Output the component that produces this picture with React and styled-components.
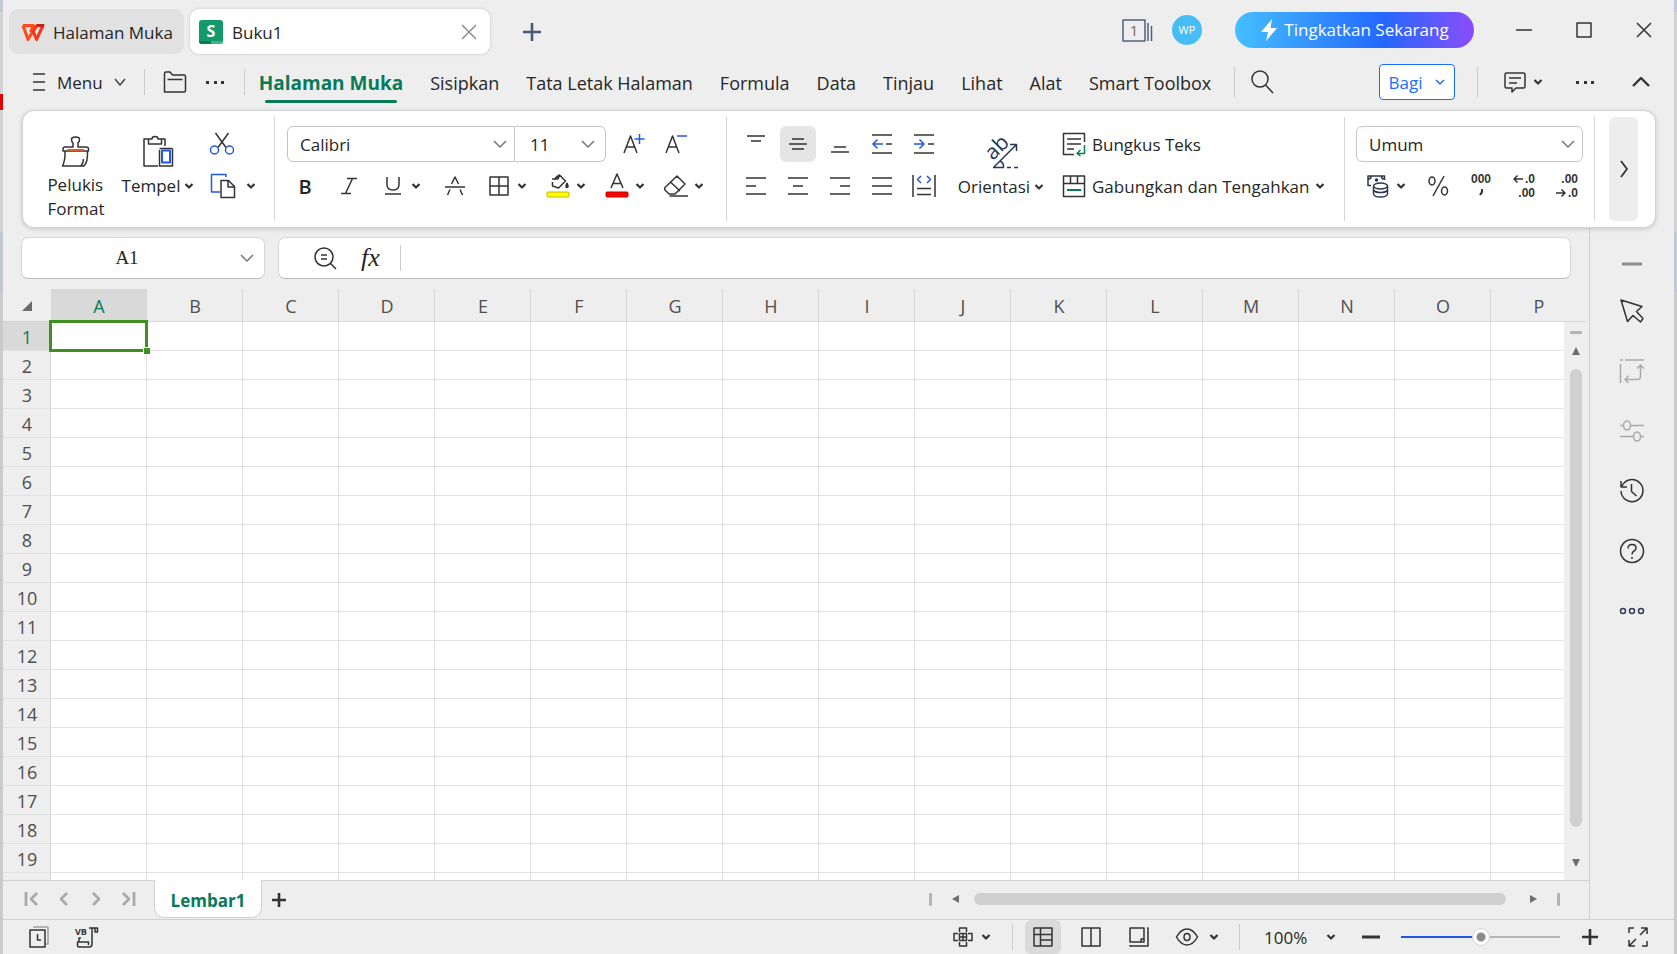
import React, { useState } from 'react';
import styled, { createGlobalStyle } from 'styled-components';

const BLUE = '#2457e0';
const GREEN = '#087a58';

const GlobalStyle = createGlobalStyle`
  * {
    box-sizing: border-box;
  }
  body {
    margin: 0;
    font-family: 'Open Sans', 'Noto Sans', sans-serif;
    font-size: 17px;
    color: #262626;
  }
  button, input, select {
    font: inherit;
    color: inherit;
  }
  button {
    padding: 0;
    border: none;
    background: none;
  }
  svg {
    display: block;
    flex: none;
    overflow: visible;
  }
`;

const Desktop = styled.div`
  height: 100vh;
  padding: 0 3px;
  background:
    linear-gradient(#e00000, #e00000) 0 94px / 3px 16px no-repeat,
    linear-gradient(#c3c9d6 0 12px, #d2d2d2 12px 232px, #c0c6d2 232px 292px, #cacaca 292px);
`;

const Window = styled.div`
  height: 100%;
  display: flex;
  flex-direction: column;
  background: #eeeeee;
`;

const Spacer = styled.div`
  flex: 1;
`;

const Line = styled.span`
  flex: none;
  width: 1px;
  height: ${(p) => p.$h || 26}px;
  background: #cbcbcb;
`;

const IconButton = styled.button`
  display: flex;
  align-items: center;
  justify-content: center;
  flex: none;
  width: ${(p) => p.$w || 36}px;
  height: 36px;
  border-radius: 6px;
  background: ${(p) => (p.$active ? '#e5e5e5' : 'transparent')};
`;

/* title bar */

const TitleBar = styled.header`
  display: flex;
  align-items: center;
  flex: none;
  height: 57px;
  padding: 6px 6px 0;
`;

const HomeTab = styled.button`
  display: flex;
  align-items: center;
  gap: 8px;
  height: 45px;
  width: 175px;
  padding: 2px 0 0 12px;
  border-radius: 9px;
  background: #e1e1e1;
`;

const DocTab = styled.div`
  display: flex;
  align-items: center;
  gap: 9px;
  width: 300px;
  height: 45px;
  margin: 0 24px 0 6px;
  padding: 1px 3px 0 9px;
  border-radius: 9px;
  background: #fff;
  box-shadow: 0 0 3px #bdbdbd;
`;

const TitleTools = styled.div`
  display: flex;
  align-items: center;
  height: 45px;
  padding-bottom: 4px;
`;

const Avatar = styled.span`
  display: flex;
  align-items: center;
  justify-content: center;
  width: 30px;
  height: 30px;
  margin: 0 33px 0 18px;
  border-radius: 50%;
  background: #46bdf4;
  color: #fff;
  font-size: 11px;
`;

const UpgradeButton = styled.button`
  display: flex;
  align-items: center;
  justify-content: center;
  gap: 6px;
  width: 239px;
  height: 36px;
  margin-right: 26px;
  border-radius: 18px;
  background: linear-gradient(90deg, #45bffe, #2368ff 62%, #8a4dfb);
  color: #fff;
`;

const WindowButtons = styled.div`
  display: flex;
  gap: 12px;
`;

/* menu bar */

const MenuBar = styled.nav`
  display: flex;
  align-items: center;
  flex: none;
  height: 53px;
  padding: 0 15px 3px 29px;
`;

const MenuButton = styled.button`
  display: flex;
  align-items: center;
  gap: 11px;
  margin-right: 18px;
`;

const MoreButton = styled(IconButton)`
  width: 20px;
  margin-right: 19px;
`;

const Tabs = styled.div`
  display: flex;
  gap: 27px;
  margin: 0 23px 0 14px;
`;

const Tab = styled.button`
  position: relative;
  height: 42px;
  padding-top: 2px;
  font-size: ${(p) => (p.$active ? 19 : 18)}px;
  line-height: 40px;
  white-space: nowrap;
  font-weight: ${(p) => (p.$active ? 700 : 400)};
  color: ${(p) => (p.$active ? GREEN : '#262626')};

  &::after {
    content: '';
    position: absolute;
    left: 6px;
    right: 6px;
    bottom: 0;
    height: 3px;
    border-radius: 2px;
    background: ${(p) => (p.$active ? GREEN : 'transparent')};
  }
`;

const ShareButton = styled.button`
  display: flex;
  align-items: center;
  justify-content: center;
  gap: 13px;
  width: 76px;
  height: 36px;
  margin-right: 22px;
  border: 1px solid #1a6dff;
  border-radius: 4px;
  background: #fff;
  color: #1a6dff;
`;

const MenuEnd = styled.div`
  display: flex;
  gap: 20px;
  padding-left: 23px;
`;

/* ribbon */

const Ribbon = styled.section`
  position: relative;
  display: flex;
  flex: none;
  height: 118px;
  margin: 0 18px 0 19px;
  padding: 6px 0;
  border: 1px solid #d2d2d2;
  border-radius: 12px;
  background: #fff;
  box-shadow: 0 1px 4px #c4c4c4;
`;

const Group = styled.div`
  display: flex;
  flex: ${(p) => (p.$grow ? 1 : 'none')};
  padding: 0 ${(p) => p.$right || 0}px 0 ${(p) => p.$left || 0}px;
  border-right: 1px solid #d6d6d6;
`;

const Rows = styled.div`
  display: flex;
  flex-direction: column;
  gap: 6px;
  padding-top: 9px;
`;

const Row = styled.div`
  display: flex;
  align-items: center;
  height: 36px;
  gap: ${(p) => p.$gap || 0}px;
  padding-left: ${(p) => p.$left || 0}px;
`;

const BigButton = styled.button`
  display: flex;
  flex-direction: column;
  align-items: center;
  width: ${(p) => p.$w}px;
  margin-right: ${(p) => p.$gap}px;
  padding-top: 18px;
  line-height: 24px;
  text-align: left;
`;

const BigLabel = styled.span`
  display: flex;
  align-items: center;
  gap: 4px;
  margin-top: ${(p) => p.$top || 6}px;
`;

const Split = styled.button`
  display: flex;
  align-items: center;
  flex: none;
  gap: 4px;
  width: ${(p) => p.$w || 46}px;
  height: 36px;
`;

const SplitFace = styled.span`
  display: flex;
  justify-content: center;
  width: ${(p) => p.$w || 28}px;
`;

const LabelButton = styled.button`
  display: flex;
  align-items: center;
  gap: 6px;
  height: 36px;
  white-space: nowrap;
`;

const AlignLabels = styled.div`
  display: flex;
  margin-left: 15px;
`;

const SelectBox = styled.label`
  position: relative;
  display: flex;
  width: ${(p) => p.$w}px;
  height: 36px;

  select {
    appearance: none;
    width: 100%;
    padding: 0 30px 0 ${(p) => (p.$joined ? 15 : 12)}px;
    border: 1px solid #c6c6c6;
    border-left-width: ${(p) => (p.$joined ? 0 : 1)}px;
    border-radius: ${(p) => p.$radius || '6px'};
    background: #fff;
    outline: none;
  }
  svg {
    position: absolute;
    right: ${(p) => (p.$joined ? 11 : 8)}px;
    top: 14px;
    pointer-events: none;
  }
`;

const Letter = styled.span`
  font-size: 20px;
  font-weight: 600;
`;

const MoreRibbon = styled.button`
  display: flex;
  align-items: center;
  justify-content: center;
  width: 29px;
  margin: 0 17px 0 14px;
  border-radius: 6px;
  background: #ededed;
`;

/* work area */

const Work = styled.div`
  display: flex;
  flex: 1;
  min-height: 0;
`;

const Main = styled.main`
  display: flex;
  flex: 1;
  flex-direction: column;
  min-width: 0;
  border-right: 1px solid #cfcfcf;
`;

const FormulaRow = styled.div`
  display: flex;
  flex: none;
  gap: 13px;
  padding: 9px 18px 10px;
`;

const Field = styled.div`
  display: flex;
  align-items: center;
  flex: ${(p) => (p.$w ? 'none' : 1)};
  width: ${(p) => (p.$w ? `${p.$w}px` : 'auto')};
  height: 42px;
  padding: 0 10px;
  border: 1px solid #d6d6d6;
  border-bottom-color: #bdbdbd;
  border-radius: 7px;
  background: #fff;
`;

const FormulaInput = styled.input`
  flex: 1;
  min-width: 0;
  border: none;
  outline: none;
  background: none;
`;

const NameInput = styled(FormulaInput)`
  padding-right: 20px;
  font-family: 'Liberation Serif', serif;
  font-size: 19px;
  text-align: center;
`;

const FormulaTools = styled.div`
  display: flex;
  align-items: center;
  gap: 18px;
  padding: 0 20px 0 18px;
`;

const Fx = styled.span`
  font: italic 26px 'Liberation Serif', serif;
`;

const SheetArea = styled.div`
  position: relative;
  flex: 1;
  min-height: 0;
  overflow: hidden;
`;

const Sheet = styled.table`
  table-layout: fixed;
  width: 1584px;
  border-collapse: separate;
  border-spacing: 0;

  th {
    padding: 2px 0 0 1px;
    font-size: 18px;
    font-weight: 400;
    color: #4f4f4f;
    background: #eeeeee;
    border-right: 1px solid #d6d6d6;
    border-bottom: 1px solid #d6d6d6;
  }
  thead th {
    height: 33px;
    line-height: 30px;
  }
  tbody th {
    height: 29px;
    line-height: 26px;
    border-bottom-color: #e2e2e2;
  }
  thead th:first-child,
  thead th:last-child {
    border-right-color: transparent;
  }
  td {
    position: relative;
    padding: 0;
    background: #fff;
    border-right: 1px solid #e2e2e2;
    border-bottom: 1px solid #e2e2e2;
  }
  && .on {
    background: #d9d9d9;
    color: ${GREEN};
  }
`;

const Corner = styled.span`
  display: flex;
  justify-content: center;
`;

const Cursor = styled.div`
  position: absolute;
  z-index: 1;
  inset: -2px;
  border: 3px solid #3f8f22;

  &::after {
    content: '';
    position: absolute;
    right: -5px;
    bottom: -5px;
    width: 6px;
    height: 6px;
    border: 1px solid #fff;
    border-width: 1px 0 0 1px;
    background: #3f8f22;
  }
`;

const VScroll = styled.div`
  position: absolute;
  top: 33px;
  right: 0;
  bottom: 0;
  display: flex;
  flex-direction: column;
  align-items: center;
  width: 25px;
  padding: 9px 2px 12px 0;
  background: #eeeeee;
`;

const Grip = styled.span`
  flex: none;
  width: ${(p) => p.$w}px;
  height: ${(p) => p.$h}px;
  border-radius: 1px;
  background: #b4b4b4;
`;

const VTrack = styled.span`
  display: flex;
  flex: 1;
  flex-direction: column;
  align-items: center;
  padding-top: 12px;
`;

const VThumb = styled.span`
  flex: 1;
  width: 12px;
  margin: 13px 0 31px;
  border-radius: 6px;
  background: #d0d0d0;
`;

const HTrack = styled.span`
  display: flex;
  flex: 1;
  align-items: center;
  padding: 0 19px;
`;

const HThumb = styled.span`
  flex: 1;
  height: 12px;
  margin: 0 22px 0 13px;
  border-radius: 6px;
  background: #d0d0d0;
`;

const SheetBar = styled.div`
  display: flex;
  flex: none;
  height: 39px;
  padding: 0 29px 0 13px;
  border-top: 1px solid #d3d3d3;
`;

const SheetTab = styled.button`
  position: relative;
  height: 38px;
  width: 108px;
  margin: -1px 0 0 10px;
  padding-top: 3px;
  border: 1px solid #d3d3d3;
  border-top: none;
  border-radius: 0 0 10px 10px;
  background: #fff;
  color: ${GREEN};
  font-weight: 700;
`;

const HScroll = styled.div`
  display: flex;
  align-items: center;
  width: 631px;
  height: 36px;
`;

const SideBar = styled.aside`
  display: flex;
  flex-direction: column;
  align-items: center;
  gap: 27px;
  width: 84px;
  padding-top: 34px;
`;

const SideButtons = styled.div`
  display: flex;
  flex-direction: column;
  gap: 24px;
`;

/* status bar */

const StatusBar = styled.footer`
  display: flex;
  align-items: center;
  flex: none;
  height: 35px;
  padding: 0 18px;
  border-top: 1px solid #d0d0d0;
`;

const StatusTools = styled.div`
  display: flex;
  align-items: center;
  gap: 12px;
  margin-left: ${(p) => p.$left || 0}px;
`;

const ViewButton = styled(IconButton)`
  height: 34px;
  background: ${(p) => (p.$active ? '#dadada' : 'transparent')};
`;

const ZoomTools = styled.div`
  display: flex;
  align-items: center;
  margin-left: 20px;
`;

const ZoomButton = styled.button`
  display: flex;
  align-items: center;
  justify-content: space-between;
  width: 72px;
  margin: 0 17px 0 24px;
`;

const ZoomSlider = styled.input`
  appearance: none;
  width: 159px;
  height: 20px;
  margin: 0 12px;
  background: none;

  &::-webkit-slider-runnable-track {
    height: 2px;
    background: linear-gradient(90deg, #1e55e6 50%, #b5b5b5 50%);
  }
  &::-webkit-slider-thumb {
    appearance: none;
    width: 18px;
    height: 18px;
    margin-top: -8px;
    border: 1px solid #d4d4d4;
    border-radius: 50%;
    background: radial-gradient(circle, #8b8b8b 4px, #fff 5px);
  }
`;

const FullScreen = styled(IconButton)`
  margin-left: 12px;
`;

/* icons */

const Icon = ({ w = 24, h = 24, c = '#333', s = 1.5, children }) => (
  <svg
    width={w}
    height={h}
    viewBox={`0 0 ${w} ${h}`}
    fill="none"
    stroke={c}
    strokeWidth={s}
    strokeLinejoin="round"
    aria-hidden="true"
  >
    {children}
  </svg>
);

const Caret = () => (
  <Icon w={10} h={8} s={2.2}>
    <path d="M1.500 2L5 5.500L8.500 2" />
  </Icon>
);

const Chevron = ({ w = 14, c = '#777' }) => (
  <Icon w={w} h={8} c={c}>
    <path d={`M1 1L${w / 2} 7L${w - 1} 1`} />
  </Icon>
);

const SmallChevron = () => (
  <Icon w={10} h={6} c="#1a6dff">
    <path d="M1 1L5 5L9 1" />
  </Icon>
);

const Tri = ({ d }) => (
  <Icon w={10} h={10} s={0}>
    <path d={d} fill="#6f6f6f" />
  </Icon>
);

const Dots = () => (
  <Icon w={20} h={4} s={0}>
    <path d="M1 1h3v3h-3zM9 1h3v3h-3zM16 1h3v3h-3z" fill="#333" />
  </Icon>
);

const WpsLogo = () => (
  <svg width="24" height="20" viewBox="0 0 24 20" fill="none" strokeLinejoin="round" aria-hidden="true">
    <path d="M2 2.500H12.500L9.500 9M2 2.500L7 16.500L15 3" stroke="#ff4a1c" strokeWidth="3" />
    <path d="M12 8L15.500 16.500L22 2.500H16L12 8.500" stroke="#f7371d" strokeWidth="3" />
    <path d="M16 1H23.500L21.500 5.500C20 3.500 18 3.500 15 4Z" fill="#c9201a" />
  </svg>
);

const SheetLogo = () => (
  <svg width="24" height="24" viewBox="0 0 24 24" aria-hidden="true">
    <rect width="24" height="24" rx="3" fill="#129a6b" />
    <path d="M0 21h12v3H3a3 3 0 0 1-3-3z" fill="#067a50" />
    <path d="M12 21h12a3 3 0 0 1-3 3h-9z" fill="#3fb68a" />
    <text x="12" y="17" textAnchor="middle" fontSize="16" fontWeight="700" fill="#fff">S</text>
  </svg>
);

const FontSizeIcon = ({ minus }) => (
  <Icon w={22} h={22}>
    <path d="M1 20L7.500 3L14 20M3.500 14H11.500" />
    <path d={minus ? 'M12 3H22' : 'M11.500 6H21.500M16.500 1V11'} stroke={BLUE} />
  </Icon>
);

const alignLines = {
  top: 'M3 4H21M7 9H17',
  middle: 'M6 7H18M3 12H21M6 17H18',
  bottom: 'M6 15H18M3 20H21',
  left: 'M2 4H22M2 12H12M2 20H22',
  center: 'M2 4H22M7 12H17M2 20H22',
  right: 'M2 4H22M12 12H22M2 20H22',
  justify: 'M2 4H22M2 12H22M2 20H22',
};

const Align = ({ kind }) => (
  <Icon>
    <path d={alignLines[kind]} />
  </Icon>
);

const Indent = ({ out }) => (
  <Icon>
    <path d="M2 3H22M2 21H22M16 12H22" />
    <path d={out ? 'M13 12H3M7.500 7.500L3 12L7.500 16.500' : 'M2 12H12M7.500 7.500L12 12L7.500 16.500'} stroke={BLUE} />
  </Icon>
);

const digitText = {
  fill: '#333',
  stroke: 'none',
  fontFamily: 'Liberation Sans',
  fontSize: 12,
  fontWeight: 700,
};

const Digits = ({ top, bottom, arrow }) => (
  <Icon w={24} h={30}>
    <g {...digitText} textAnchor="end">
      <text x="23" y="12">{top}</text>
      <text x="23" y="26">{bottom}</text>
    </g>
    <path d={arrow} />
  </Icon>
);

const Painter = () => (
  <Icon w={30} h={32}>
    <path d="M12 12V8Q10.500 6.500 10.500 4.500Q10.500 2 14.500 2Q18.500 2 18.500 4.500Q18.500 6.500 17 8V12H25Q27.500 12 27.500 14V16H2V14Q2 12 4 12ZM4 16Q4.500 25 1.500 31H23Q27 27 26.500 16M20 31Q22.500 28 22.500 24" />
    <path d="M6 15H23" stroke="#d9622b" strokeWidth="2" />
  </Icon>
);

const Paste = () => (
  <Icon w={32} h={32}>
    <path d="M7 4H2V31H16M23 11V4H19M6.500 4V9H19.500V4H16Q16 1.500 13 1.500Q10 1.500 10 4ZM17.500 31V15M30.500 13.500V31H17" />
    <rect x="20" y="15.500" width="8" height="12" stroke={BLUE} strokeWidth="2" />
    <path d="M17.500 13.500H30.500" />
  </Icon>
);

const Cut = () => (
  <Icon w={26} h={24}>
    <path d="M6.500 1L17 15.500M19.500 1L9 15.500" />
    <circle cx="5.500" cy="18" r="4" stroke={BLUE} />
    <circle cx="20.500" cy="18" r="4" stroke={BLUE} />
  </Icon>
);

const Copy = () => (
  <Icon w={26} h={26}>
    <path d="M10 19H1.500V1.500H16V4" stroke={BLUE} />
    <path d="M11 7.500H18.500L24.500 13.500V24.500H11ZM18 8V14H24" />
  </Icon>
);

const Orientation = () => (
  <Icon w={36} h={34} c="#2c3550">
    <text x="10" y="26" transform="rotate(-45 10 26)" fontSize="21" fill="#2c3550" stroke="none">
      ab
    </text>
    <path d="M11 32L33 10M27 9.500H33.500V16M10 32.500H21M24 32.500H28M31 32.500H35M17 26Q21 28 20.500 32" />
  </Icon>
);

const Wrap = () => (
  <Icon>
    <path d="M12 22.500H1.500V1.500H22.500V10M5 7H19M5 12H19M5 17H12" />
    <path d="M22.500 13V21.500H15M18.500 18L15 21.500L18.500 24" stroke={GREEN} />
  </Icon>
);

const Merge = () => (
  <Icon>
    <path d="M1.500 2H22.500V22.500H1.500ZM1.500 9.500H22.500M8.500 2V9M15.500 2V9" />
    <path d="M5 16H19" stroke={GREEN} strokeWidth="2" />
  </Icon>
);

const Money = () => (
  <Icon w={24} h={24} c="#2c3550">
    <path d="M5 11.500H2V2H18.500V6M2.500 5Q5 5 5 2.500M15.500 2.500Q15.500 5 18 5" />
    <circle cx="10.500" cy="6" r="1" fill="#2c3550" />
    <ellipse cx="14.500" cy="12" rx="7" ry="3" />
    <path d="M7.500 12V20Q8 23 14.500 23Q21 23 21.500 20V12M7.500 16Q9 18.500 14.500 18.500Q20 18.500 21.500 16" />
  </Icon>
);

const sideIcons = [
  {
    label: 'Pilih',
    art: <path d="M2 2L23 8.500L17.500 13.500L24 20.500L21.500 24L14 17.500L8.500 23.500Z" />,
  },
  {
    label: 'Properti',
    c: '#a9a9a9',
    art: <path d="M6 2H25M1.500 6V25M1 2H4M21.500 7V18.500Q21.500 21.500 18.500 21.500H6M18 10.500L21.500 7L25 10.500M9.500 18L6 21.500L9.500 25" />,
  },
  {
    label: 'Pengaturan',
    c: '#a9a9a9',
    art: (
      <>
        <path d="M1 7.500H4M12 7.500H25M1 18.500H14M22 18.500H25" />
        <ellipse cx="8" cy="7.500" rx="3.500" ry="4.500" />
        <ellipse cx="18" cy="18.500" rx="3.500" ry="4.500" />
      </>
    ),
  },
  {
    label: 'Riwayat',
    art: <path d="M3 8A11 11 0 1 1 2 13M2 3V9H8M12.500 6V13.500L17.500 18" />,
  },
  {
    label: 'Bantuan',
    art: (
      <>
        <circle cx="13" cy="13" r="11.500" />
        <path d="M9 10.500Q9 6.500 13 6.500Q17 6.500 17 10Q17 12 15 13Q13 14 13 16.500M13 19V21" />
      </>
    ),
  },
  {
    label: 'Lainnya',
    art: (
      <g stroke="#333b55">
        <circle cx="4" cy="13" r="2.500" />
        <circle cx="13" cy="13" r="2.500" />
        <circle cx="22" cy="13" r="2.500" />
      </g>
    ),
  },
];

const sheetNav = [
  { label: 'Lembar pertama', d: 'M2 2V16M13 3L7 9L13 15' },
  { label: 'Sebelumnya', d: 'M11 3L5 9L11 15' },
  { label: 'Berikutnya', d: 'M5 3L11 9L5 15' },
  { label: 'Lembar terakhir', d: 'M3 3L9 9L3 15M14 2V16' },
];

const views = [
  { label: 'Normal', d: 'M2 2H20V20H2ZM2 8.500H20M8.500 2V20M8.500 14H20' },
  { label: 'Tata letak halaman', d: 'M2 2H20V20H2ZM11 2V20' },
  { label: 'Pratinjau', d: 'M2 2H16V16H2ZM19 2H20V20H2V19M13 16V13H16' },
];

const tabs = [
  'Halaman Muka',
  'Sisipkan',
  'Tata Letak Halaman',
  'Formula',
  'Data',
  'Tinjau',
  'Lihat',
  'Alat',
  'Smart Toolbox',
];
const columns = 'ABCDEFGHIJKLMNOP'.split('');
const rows = Array.from({ length: 20 }, (_, i) => i + 1);

const Title = () => (
  <TitleBar>
    <HomeTab>
      <WpsLogo />
      Halaman Muka
    </HomeTab>
    <DocTab>
      <SheetLogo />
      Buku1
      <Spacer />
      <IconButton aria-label="Tutup tab">
        <Icon w={16} h={16} c="#8c8c8c">
          <path d="M1 1L15 15M15 1L1 15" />
        </Icon>
      </IconButton>
    </DocTab>
    <IconButton aria-label="Tab baru">
      <Icon w={20} h={20} c="#4a5a7c" s={2.6}>
        <path d="M1 10H19M10 1V19" />
      </Icon>
    </IconButton>
    <Spacer />
    <TitleTools>
      <Icon w={32} h={24} c="#52617f">
        <rect x="1" y="2" width="22" height="21" />
        <path d="M26 5V23M29.500 8V23" />
        <text x="12" y="18" textAnchor="middle" fontSize="15" fill="#7a6a50" stroke="none">1</text>
      </Icon>
      <Avatar>WP</Avatar>
      <UpgradeButton>
        <svg width="18" height="24" viewBox="0 0 18 24" aria-hidden="true">
          <path d="M12 1L1 14H8L6 23L17 10H10.500Z" fill="#fff" />
        </svg>
        Tingkatkan Sekarang
      </UpgradeButton>
      <WindowButtons>
        <IconButton $w={48} aria-label="Kecilkan">
          <Icon w={16} h={16}>
            <path d="M0 8H16" />
          </Icon>
        </IconButton>
        <IconButton $w={48} aria-label="Besarkan">
          <Icon w={16} h={16}>
            <rect x="1" y="1" width="14" height="14" />
          </Icon>
        </IconButton>
        <IconButton $w={48} aria-label="Tutup">
          <Icon w={16} h={16}>
            <path d="M1 1L15 15M15 1L1 15" />
          </Icon>
        </IconButton>
      </WindowButtons>
    </TitleTools>
  </TitleBar>
);

const Menu = () => {
  const [tab, setTab] = useState(tabs[0]);
  return (
    <MenuBar>
      <MenuButton>
        <Icon w={14} h={18}>
          <path d="M1 1H13M1 9H13M1 17H13" />
        </Icon>
        Menu
        <Chevron w={12} c="#444" />
      </MenuButton>
      <Line />
      <IconButton $w={60} aria-label="Buka">
        <Icon>
          <path d="M1.500 22V3.500Q1.500 2 3 2H7L9.500 5H21Q22.500 5 22.500 6.500V20.500Q22.500 22 21 22ZM4.500 9.500H19.500" />
        </Icon>
      </IconButton>
      <MoreButton aria-label="Lainnya">
        <Dots />
      </MoreButton>
      <Line />
      <Tabs>
        {tabs.map((name) => (
          <Tab key={name} $active={name === tab} onClick={() => setTab(name)}>
            {name}
          </Tab>
        ))}
      </Tabs>
      <Line $h={30} />
      <IconButton $w={54} aria-label="Cari">
        <Icon>
          <circle cx="10" cy="9" r="8" />
          <path d="M15.500 15L23 23" />
        </Icon>
      </IconButton>
      <Spacer />
      <ShareButton>
        Bagi
        <SmallChevron />
      </ShareButton>
      <Line $h={30} />
      <MenuEnd>
        <Split aria-label="Komentar">
          <SplitFace>
            <Icon>
              <path d="M3.500 3H20.500Q22 3 22 4.500V16.500Q22 18 20.500 18H13L9 22V18H3.500Q2 18 2 16.500V4.500Q2 3 3.500 3ZM6 8H18M6 13H14" />
            </Icon>
          </SplitFace>
          <Caret />
        </Split>
        <IconButton aria-label="Opsi lain">
          <Dots />
        </IconButton>
        <IconButton aria-label="Ciutkan pita">
          <Icon w={20} h={12} s={2.4}>
            <path d="M2 10L10 2L18 10" />
          </Icon>
        </IconButton>
      </MenuEnd>
    </MenuBar>
  );
};

const ClipboardGroup = () => (
  <Group $left={21} $right={1}>
    <BigButton $w={64} $gap={11}>
      <Painter />
      <BigLabel>
        Pelukis
        <br />
        Format
      </BigLabel>
    </BigButton>
    <BigButton $w={78} $gap={7}>
      <Paste />
      <BigLabel $top={7}>
        Tempel
        <Caret />
      </BigLabel>
    </BigButton>
    <Rows>
      <IconButton aria-label="Potong">
        <Cut />
      </IconButton>
      <Split $w={69} aria-label="Salin">
        <SplitFace $w={38}>
          <Copy />
        </SplitFace>
        <Caret />
      </Split>
    </Rows>
  </Group>
);

const FontGroup = () => (
  <Group $left={12} $right={18}>
    <Rows>
      <Row>
        <SelectBox $w={228} $radius="6px 0 0 6px">
          <select aria-label="Font" defaultValue="Calibri">
            <option>Calibri</option>
          </select>
          <Chevron />
        </SelectBox>
        <SelectBox $w={91} $radius="0 6px 6px 0" $joined>
          <select aria-label="Ukuran font" defaultValue="11">
            <option>11</option>
          </select>
          <Chevron />
        </SelectBox>
        <Row $gap={6} $left={10}>
          <IconButton aria-label="Perbesar font">
            <FontSizeIcon />
          </IconButton>
          <IconButton aria-label="Perkecil font">
            <FontSizeIcon minus />
          </IconButton>
        </Row>
      </Row>
      <Row $gap={13} $left={4}>
        <IconButton $w={28} aria-label="Tebal">
          <Letter>B</Letter>
        </IconButton>
        <IconButton $w={34} aria-label="Miring">
          <Icon w={18} h={18}>
            <path d="M7 1.500H17M1 16.500H11M12.500 1.500L5.500 16.500" />
          </Icon>
        </IconButton>
        <Split aria-label="Garis bawah">
          <SplitFace>
            <Icon w={18} h={18}>
              <path d="M3 0V7.500Q3 13 9 13Q15 13 15 7.500V0M1 17H17" />
            </Icon>
          </SplitFace>
          <Caret />
        </Split>
        <IconButton $w={34} aria-label="Coret">
          <Icon w={20} h={20}>
            <path d="M6.500 8L10 1L13.500 8M0 11H20M2.500 19L5 13.500M17.500 19L15 13.500" />
          </Icon>
        </IconButton>
        <Split aria-label="Batas">
          <SplitFace>
            <Icon w={22} h={22}>
              <path d="M2 2H20V20H2ZM2 11H20M11 2V20" />
            </Icon>
          </SplitFace>
          <Caret />
        </Split>
        <Split aria-label="Warna isian">
          <SplitFace>
            <Icon w={24} h={26}>
              <path d="M6 6H12L13.500 2L19.500 8L12.500 15L6.500 13V9M13.500 2Q10 4 8 6.500" />
              <path d="M21 10Q19 14 21 14.500Q23 14 21 10" fill="#333" />
              <rect x="1" y="19" width="22" height="5" rx="1" fill="#ffff00" stroke="#c8b400" strokeWidth="1" />
            </Icon>
          </SplitFace>
          <Caret />
        </Split>
        <Split aria-label="Warna font">
          <SplitFace>
            <Icon w={24} h={26}>
              <path d="M6 15L12 1L18 15M8.500 10.500H15.500" />
              <rect x="1" y="19" width="22" height="5" rx="1" fill="#ff0000" stroke="#c00000" strokeWidth="1" />
            </Icon>
          </SplitFace>
          <Caret />
        </Split>
        <Split aria-label="Hapus">
          <SplitFace>
            <Icon w={26} h={24}>
              <path d="M14 2L22 10L12 20H6L2 16Q1 14 2.500 13ZM8 8.500L17 17M6.500 22H25" />
            </Icon>
          </SplitFace>
          <Caret />
        </Split>
      </Row>
    </Rows>
  </Group>
);

const AlignGroup = () => {
  const [vertical, setVertical] = useState('middle');
  return (
    <Group $left={11} $grow>
      <Rows>
        <Row $gap={6}>
          {['top', 'middle', 'bottom'].map((kind) => (
            <IconButton key={kind} aria-label={kind} $active={kind === vertical} onClick={() => setVertical(kind)}>
              <Align kind={kind} />
            </IconButton>
          ))}
          <IconButton aria-label="Kurangi indentasi">
            <Indent out />
          </IconButton>
          <IconButton aria-label="Tambah indentasi">
            <Indent />
          </IconButton>
        </Row>
        <Row $gap={6}>
          {['left', 'center', 'right', 'justify'].map((kind) => (
            <IconButton key={kind} aria-label={kind}>
              <Align kind={kind} />
            </IconButton>
          ))}
          <IconButton aria-label="Distribusi">
            <Icon w={26}>
              <path d="M2 1V23M24 1V23M6 14.500H20M6 20.500H20" />
              <path d="M10 2L6.500 5.500L10 9M16 2L19.500 5.500L16 9" stroke={BLUE} />
            </Icon>
          </IconButton>
        </Row>
      </Rows>
      <AlignLabels>
        <BigButton $w={88} $gap={17}>
          <Orientation />
          <BigLabel>
            Orientasi
            <Caret />
          </BigLabel>
        </BigButton>
        <Rows>
          <LabelButton>
            <Wrap />
            Bungkus Teks
          </LabelButton>
          <LabelButton>
            <Merge />
            Gabungkan dan Tengahkan
            <Caret />
          </LabelButton>
        </Rows>
      </AlignLabels>
    </Group>
  );
};

const NumberGroup = () => (
  <Group $left={11} $right={9}>
    <Rows>
      <SelectBox $w={227}>
        <select aria-label="Format angka" defaultValue="Umum">
          <option>Umum</option>
        </select>
        <Chevron />
      </SelectBox>
      <Row $left={8} $gap={7}>
        <Split $w={49} aria-label="Mata uang">
          <SplitFace>
            <Money />
          </SplitFace>
          <Caret />
        </Split>
        <IconButton aria-label="Persen">
          <Icon w={22}>
            <path d="M17 2L6 22" />
            <ellipse cx="5" cy="7" rx="3" ry="4" />
            <ellipse cx="17.500" cy="17" rx="3" ry="4" />
          </Icon>
        </IconButton>
        <IconButton aria-label="Pemisah ribuan">
          <Icon w={24} h={30}>
            <text x="12" y="12" textAnchor="middle" {...digitText}>000</text>
            <path d="M12 19H13V21L11 24" strokeWidth="2.200" />
          </Icon>
        </IconButton>
        <IconButton aria-label="Tambah desimal">
          <Digits top=".0" bottom=".00" arrow="M11 8H2M5.500 4.500L2 8L5.500 11.500" />
        </IconButton>
        <IconButton aria-label="Kurangi desimal">
          <Digits top=".00" bottom=".0" arrow="M1 22H10M6.500 18.500L10 22L6.500 25.500" />
        </IconButton>
      </Row>
    </Rows>
  </Group>
);

const Grid = () => (
  <Sheet>
    <colgroup>
      <col width="48" />
      {columns.map((c) => (
        <col key={c} />
      ))}
    </colgroup>
    <thead>
      <tr>
        <th aria-label="Pilih semua">
          <Corner>
            <Icon w={12} h={10} s={0}>
              <path d="M11 0V10H1Z" fill="#6b6b6b" />
            </Icon>
          </Corner>
        </th>
        {columns.map((c) => (
          <th key={c} className={c === 'A' ? 'on' : undefined}>
            {c}
          </th>
        ))}
      </tr>
    </thead>
    <tbody>
      {rows.map((r) => (
        <tr key={r}>
          <th className={r === 1 ? 'on' : undefined}>{r}</th>
          {columns.map((c) => (
            <td key={c}>{r === 1 && c === 'A' && <Cursor />}</td>
          ))}
        </tr>
      ))}
    </tbody>
  </Sheet>
);

const Workbook = () => (
  <Main>
    <FormulaRow>
      <Field $w={244}>
        <NameInput aria-label="Kotak nama" defaultValue="A1" />
        <Chevron />
      </Field>
      <Field>
        <FormulaTools>
          <IconButton aria-label="Cari fungsi">
            <Icon>
              <circle cx="11" cy="11" r="9" />
              <path d="M17.500 17.500L23 23M8 9H14M8 13H14" />
            </Icon>
          </IconButton>
          <Fx>fx</Fx>
        </FormulaTools>
        <Line />
        <FormulaInput aria-label="Rumus" />
      </Field>
    </FormulaRow>
    <SheetArea>
      <Grid />
      <VScroll>
        <Grip $w={12} $h={3} />
        <VTrack>
          <Tri d="M5 1L9 9H1Z" />
          <VThumb />
          <Tri d="M1 1H9L5 9Z" />
        </VTrack>
      </VScroll>
    </SheetArea>
    <SheetBar>
      {sheetNav.map(({ label, d }) => (
        <IconButton key={label} $w={32} aria-label={label}>
          <Icon w={16} h={18} c="#a9a9a9" s={2.8}>
            <path d={d} />
          </Icon>
        </IconButton>
      ))}
      <SheetTab>Lembar1</SheetTab>
      <IconButton $w={34} aria-label="Tambah lembar">
        <Icon w={16} h={16} s={2.6}>
          <path d="M1 9H15M8 2V16" />
        </Icon>
      </IconButton>
      <Spacer />
      <HScroll>
        <Grip $w={3} $h={13} />
        <HTrack>
          <Tri d="M8 1V9L1 5Z" />
          <HThumb />
          <Tri d="M2 1V9L9 5Z" />
        </HTrack>
        <Grip $w={3} $h={13} />
      </HScroll>
    </SheetBar>
  </Main>
);

const Status = () => {
  const [zoom, setZoom] = useState(50);
  return (
    <StatusBar>
      <StatusTools>
        <IconButton aria-label="Cadangan">
          <Icon w={22} h={24}>
            <path d="M6 3V2H20V19H18" stroke="#a0a0a0" />
            <path d="M2 5H17V22H2ZM9.500 9V15H13" />
          </Icon>
        </IconButton>
        <IconButton aria-label="Editor makro">
          <Icon>
            <text x="0" y="10" fontSize="9" fontWeight="700" fill="#333" stroke="none">VB</text>
            <path d="M14 3H20V7H22.500V3H20M17 3V19Q17 22 14 22H4Q2.500 22 2.500 20V17H13.500V20M4 17V13H6" />
          </Icon>
        </IconButton>
      </StatusTools>
      <Spacer />
      <Split aria-label="Mode baca">
        <SplitFace>
          <Icon w={22} h={22}>
            <path d="M7.500 6V2H14.500V6M7.500 16V20H14.500V16M6 7.500H2V14.500H6M16 7.500H20V14.500H16M7.500 7.500H14.500V14.500H7.500ZM11 7.500V14.500M7.500 11H14.500" />
          </Icon>
        </SplitFace>
        <Caret />
      </Split>
      <StatusTools $left={17}>
        <Line />
        {views.map(({ label, d }, i) => (
          <ViewButton key={label} aria-label={label} $active={i === 0}>
            <Icon w={22} h={22}>
              <path d={d} />
            </Icon>
          </ViewButton>
        ))}
        <Split $w={50} aria-label="Perlindungan mata">
          <SplitFace $w={38}>
            <Icon w={24} h={20}>
              <path d="M1.500 10Q6 2 12 2Q18 2 22.500 10Q18 18 12 18Q6 18 1.500 10Z" />
              <ellipse cx="12" cy="10" rx="3" ry="3.500" />
            </Icon>
          </SplitFace>
          <Caret />
        </Split>
      </StatusTools>
      <ZoomTools>
        <Line />
        <ZoomButton>
          100%
          <Caret />
        </ZoomButton>
        <IconButton aria-label="Perkecil">
          <Icon w={18} h={18} s={3}>
            <path d="M0 9H18" />
          </Icon>
        </IconButton>
        <ZoomSlider
          type="range"
          aria-label="Zoom"
          value={zoom}
          onChange={(e) => setZoom(Number(e.target.value))}
        />
        <IconButton aria-label="Perbesar">
          <Icon w={16} h={16} s={2.6}>
            <path d="M0 8H16M8 0V16" />
          </Icon>
        </IconButton>
        <FullScreen aria-label="Layar penuh">
          <Icon w={22} h={22}>
            <path d="M2 7V2H7M14 2H20V8M20 2L13 9M20 15V20H15M8 20H2V14M2 20L9 13" />
          </Icon>
        </FullScreen>
      </ZoomTools>
    </StatusBar>
  );
};

const App = () => (
  <>
    <GlobalStyle />
    <Desktop>
      <Window>
        <Title />
        <Menu />
        <Ribbon>
          <ClipboardGroup />
          <FontGroup />
          <AlignGroup />
          <NumberGroup />
          <MoreRibbon aria-label="Gulir pita">
            <Icon w={10} h={18} s={1.8}>
              <path d="M2 1L8 9L2 17" />
            </Icon>
          </MoreRibbon>
        </Ribbon>
        <Work>
          <Workbook />
          <SideBar>
            <Icon w={22} h={4} c="#8f8f8f" s={3}>
              <path d="M1 2H21" />
            </Icon>
            <SideButtons>
              {sideIcons.map(({ label, c, art }) => (
                <IconButton key={label} aria-label={label}>
                  <Icon w={26} h={26} c={c}>
                    {art}
                  </Icon>
                </IconButton>
              ))}
            </SideButtons>
          </SideBar>
        </Work>
        <Status />
      </Window>
    </Desktop>
  </>
);

export default App;
